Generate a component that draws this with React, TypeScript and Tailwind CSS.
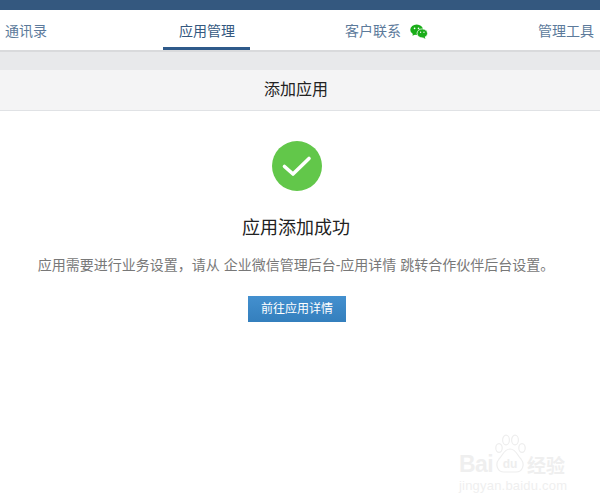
import React from 'react';

const font = 'font-["Liberation_Sans","Noto_Sans_CJK_SC",sans-serif]';

const WeChatIcon = () => (
  <svg width="18" height="15" viewBox="0 0 19 16">
    <ellipse cx="7" cy="6" rx="6.8" ry="5.6" fill="#1aad19" />
    <path d="M3 9.5 L2.6 12.6 L6 10.8 Z" fill="#1aad19" />
    <ellipse cx="13" cy="10" rx="5.6" ry="4.8" fill="#1aad19" stroke="#fff" strokeWidth="0.8" />
    <path d="M15.5 13.5 L16.4 15.8 L13.4 14.6 Z" fill="#1aad19" />
    <circle cx="4.8" cy="4.6" r="0.9" fill="#fff" />
    <circle cx="9" cy="4.6" r="0.9" fill="#fff" />
    <circle cx="11.2" cy="8.8" r="0.7" fill="#fff" />
    <circle cx="14.8" cy="8.8" r="0.7" fill="#fff" />
  </svg>
);

const CheckIcon = () => (
  <svg width="50" height="50" viewBox="0 0 50 50">
    <circle cx="25" cy="25" r="25" fill="#62c74a" />
    <path d="M12.5 25.5 L21 33 L37 17.5" fill="none" stroke="#fff" strokeWidth="3.6" strokeLinecap="round" strokeLinejoin="round" />
  </svg>
);

const Watermark = () => (
  <div className="absolute left-[459px] top-[434px] w-[130px] text-[#efefef]">
    <div className="flex items-end h-[42px]">
      <span className={`${font} text-[23px] font-bold leading-none tracking-tight`}>Bai</span>
      <svg width="32" height="42" viewBox="0 0 32 42" className="mx-[1px]">
        <g fill="#fff" stroke="#eeeeee" strokeWidth="1.2">
          <ellipse cx="5" cy="14" rx="3.2" ry="4.4" />
          <ellipse cx="12" cy="6" rx="3.4" ry="4.8" />
          <ellipse cx="21" cy="6" rx="3.4" ry="4.8" />
          <ellipse cx="28" cy="14" rx="3.2" ry="4.4" />
          <path d="M16 15 C10 15 9 21 5 25 C1 30 3 38 10 38 L22 38 C29 38 31 30 27 25 C23 21 22 15 16 15 Z" />
        </g>
        <text x="16" y="34" textAnchor="middle" fontSize="12" fontWeight="700" fill="#eeeeee" fontFamily="Liberation Sans">du</text>
      </svg>
      <span className={`${font} text-[19px] font-bold leading-none`}>经验</span>
    </div>
    <div className={`${font} text-[13px] leading-none mt-[3px] tracking-[0.2px]`}>jingyan.baidu.com</div>
  </div>
);

export default function App() {
  return (
    <div className={`${font} relative h-[500px] w-[600px] overflow-hidden bg-white`}>
      <div className="h-[10px] bg-[#34587f]" />

      <nav className="flex h-[42px] border-b-2 border-[#d9dadc] pl-[5px] text-sm leading-[20px] text-[#5c7a9b]">
        <a className="mt-[11px]">通讯录</a>
        <a className="relative ml-[116px] h-[40px] w-[87px] pl-[16px] pt-[11px] text-[#34587f]">
          应用管理
          <span className="absolute bottom-0 left-0 h-[3px] w-full bg-[#2f5a8a]" />
        </a>
        <a className="ml-[95px] mt-[11px]">客户联系</a>
        <span className="ml-[9px] mt-[14px]"><WeChatIcon /></span>
        <a className="ml-[110px] mt-[11px]">管理工具</a>
      </nav>

      <div className="h-[18px] bg-[#e8e9eb]" />

      <div className="flex h-[41px] items-center justify-center border-b border-[#e0e2e5] bg-[#f4f4f5] pb-[1px] pr-[8px] text-base text-[#222222]">
        添加应用
      </div>

      <main className="flex flex-col items-center pr-[6px] pt-[30px]">
        <CheckIcon />
        <h2 className="mr-[2px] mt-[25px] text-lg font-normal leading-[24px] text-[#222222]">应用添加成功</h2>
        <p className="mr-[2px] mt-[15px] text-sm leading-[20px] text-[#787878]">
          应用需要进行业务设置，请从 企业微信管理后台-应用详情 跳转合作伙伴后台设置。
        </p>
        <button className="mt-[21px] h-[26px] w-[98px] bg-gradient-to-b from-[#4390cf] to-[#347fbd] text-xs text-white">
          前往应用详情
        </button>
      </main>

      <Watermark />
    </div>
  );
}
